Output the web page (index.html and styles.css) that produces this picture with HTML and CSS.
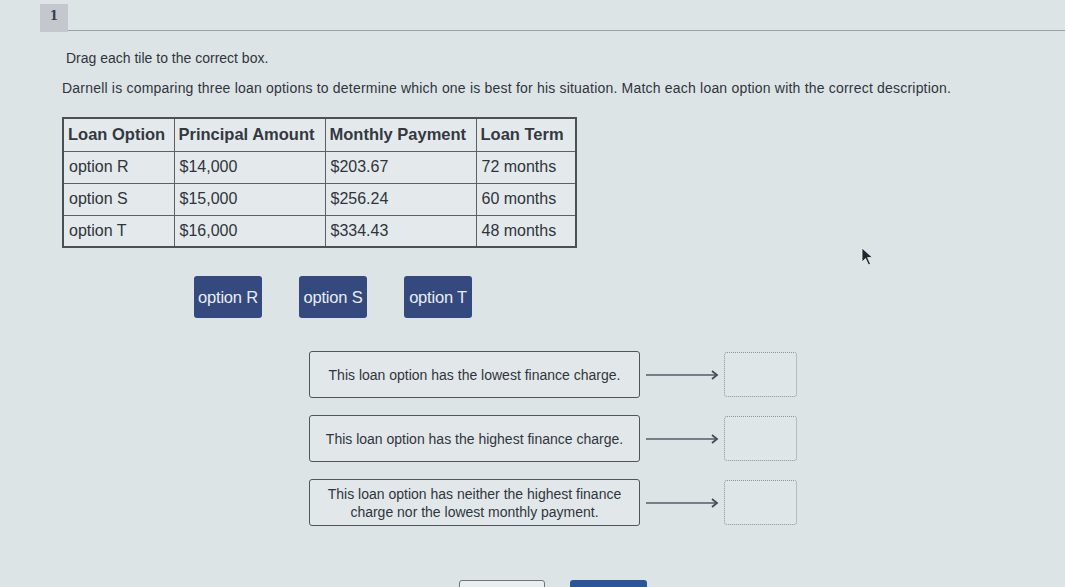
FILE: index.html
```html
<!DOCTYPE html>
<html lang="en">
<head>
<meta charset="utf-8">
<title>Question 1</title>
<link rel="stylesheet" href="styles.css">
</head>
<body>
<div class="page">
  <header class="q-head">
    <div class="q-num">1</div>
    <div class="q-rule"></div>
  </header>

  <section class="q-body">
    <p class="prompt">Drag each tile to the correct box.</p>
    <p class="stem">Darnell is comparing three loan options to determine which one is best for his situation. Match each loan option with the correct description.</p>

    <table class="loans">
      <colgroup>
        <col class="c1"><col class="c2"><col class="c3"><col class="c4">
      </colgroup>
      <thead>
        <tr><th>Loan Option</th><th>Principal Amount</th><th>Monthly Payment</th><th>Loan Term</th></tr>
      </thead>
      <tbody>
        <tr><td>option R</td><td>$14,000</td><td>$203.67</td><td>72 months</td></tr>
        <tr><td>option S</td><td>$15,000</td><td>$256.24</td><td>60 months</td></tr>
        <tr><td>option T</td><td>$16,000</td><td>$334.43</td><td>48 months</td></tr>
      </tbody>
    </table>

    <div class="tiles">
      <div class="tile">option R</div>
      <div class="tile">option S</div>
      <div class="tile">option T</div>
    </div>

    <div class="pairs">
      <div class="pair">
        <div class="desc">This loan option has the lowest finance charge.</div>
        <svg class="arrow" width="80" height="12" viewBox="0 0 80 12"><path d="M2 6H73" stroke="#555b68" stroke-width="1.6" fill="none"/><path d="M68 2L73 6L68 10" stroke="#454a56" stroke-width="1.8" fill="none"/></svg>
        <div class="drop"></div>
      </div>
      <div class="pair">
        <div class="desc">This loan option has the highest finance charge.</div>
        <svg class="arrow" width="80" height="12" viewBox="0 0 80 12"><path d="M2 6H73" stroke="#555b68" stroke-width="1.6" fill="none"/><path d="M68 2L73 6L68 10" stroke="#454a56" stroke-width="1.8" fill="none"/></svg>
        <div class="drop"></div>
      </div>
      <div class="pair">
        <div class="desc">This loan option has neither the highest finance charge nor the lowest monthly payment.</div>
        <svg class="arrow" width="80" height="12" viewBox="0 0 80 12"><path d="M2 6H73" stroke="#555b68" stroke-width="1.6" fill="none"/><path d="M68 2L73 6L68 10" stroke="#454a56" stroke-width="1.8" fill="none"/></svg>
        <div class="drop"></div>
      </div>
    </div>

    <div class="actions">
      <div class="btn btn-plain"></div>
      <div class="btn btn-primary"></div>
    </div>
  </section>

  <svg class="pointer" width="16" height="20" viewBox="0 0 16 20"><path d="M2 1L2 15L5.5 11.5L8.5 18L10.5 17L7.6 10.6L12.5 10.6Z" fill="#1f2733" stroke="#f2f4f5" stroke-width="0.8"/></svg>
</div>
</body>
</html>
```

FILE: styles.css
```css
* { box-sizing: border-box; }

html, body {
  margin: 0;
  padding: 0;
  background: #dde4e5;
}

body {
  font-family: "Liberation Sans", Arial, sans-serif;
  color: #2b2f36;
  width: 1065px;
  height: 587px;
  overflow: hidden;
}

.page {
  position: relative;
  height: 587px;
}

/* question number + rule */
.q-head {
  display: flex;
  align-items: flex-end;
  padding: 4px 0 0 40px;
}

.q-num {
  width: 28px;
  height: 28px;
  background: #c4c7ce;
  font-family: "DejaVu Serif", serif;
  font-weight: bold;
  font-size: 12px;
  color: #3b3e46;
  display: flex;
  align-items: center;
  justify-content: center;
  padding-bottom: 4px;
}

.q-rule {
  flex: 1;
  height: 1px;
  background: #9aa1a8;
  margin-bottom: 1px;
}

.q-body {
  padding-left: 66px;
}

.prompt {
  margin: 18px 0 0;
  font-size: 14px;
  line-height: 16px;
  color: #2f343d;
}

.stem {
  margin: 14px 0 0 -4px;
  font-size: 14px;
  line-height: 16px;
  color: #2f343d;
  letter-spacing: 0.2px;
}

/* loan table */
.loans {
  margin: 21px 0 0 -4px;
  border-collapse: collapse;
  border: 2px solid #4a4f58;
  font-size: 16px;
  color: #2f343c;
  background: #e4eaeb;
}

.loans .c1 { width: 111px; }
.loans .c2 { width: 151px; }
.loans .c3 { width: 151px; }
.loans .c4 { width: 100px; }

.loans th,
.loans td {
  border: 1.5px solid #5a5f68;
  text-align: left;
  padding: 0 5px;
  height: 32px;
  white-space: nowrap;
}

.loans th {
  font-weight: bold;
  font-size: 16.5px;
  height: 33px;
  color: #333842;
  padding: 0 4px;
}

/* draggable tiles */
.tiles {
  display: flex;
  gap: 37px;
  margin: 28px 0 0 128px;
}

.tile {
  width: 68px;
  height: 42px;
  background: #344a7e;
  color: #e9edf4;
  font-size: 16.5px;
  border-radius: 3px;
  display: flex;
  align-items: center;
  justify-content: center;
  letter-spacing: -0.2px;
}

/* descriptions with drop targets */
.pairs {
  display: flex;
  flex-direction: column;
  gap: 17px;
  margin: 33px 0 0 243px;
}

.pair {
  display: flex;
  align-items: center;
}

.desc {
  width: 331px;
  height: 47px;
  border: 1.5px solid #4f545d;
  border-radius: 3px;
  background: #e2e8e9;
  font-size: 14px;
  line-height: 18px;
  color: #30353d;
  display: flex;
  align-items: center;
  justify-content: center;
  text-align: center;
  padding: 0 12px;
}

.arrow {
  margin-left: 4px;
}

.drop {
  width: 73px;
  height: 45px;
  border: 1px dotted #8d939b;
  border-radius: 3px;
  background: #dfe6e7;
}

/* bottom buttons, cut off by the viewport */
.actions {
  display: flex;
  gap: 25px;
  margin: 54px 0 0 393px;
}

.btn {
  height: 30px;
  border-radius: 3px;
}

.btn-plain {
  width: 86px;
  border: 1.5px solid #6f747c;
  background: #e9eef0;
}

.btn-primary {
  width: 77px;
  background: #2a5599;
}

/* mouse pointer floating over the page */
.pointer {
  position: absolute;
  left: 860px;
  top: 247px;
}
```
